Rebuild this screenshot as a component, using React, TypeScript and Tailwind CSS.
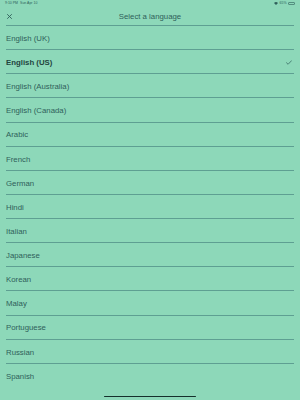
import React from "react";

const langs = [
  "English (UK)",
  "English (US)",
  "English (Australia)",
  "English (Canada)",
  "Arabic",
  "French",
  "German",
  "Hindi",
  "Italian",
  "Japanese",
  "Korean",
  "Malay",
  "Portuguese",
  "Russian",
  "Spanish",
];

export default function App() {
  return (
    <div
      className="relative w-[300px] h-[400px] overflow-hidden bg-[#8dd8b9] text-[#2f5f5a]"
      style={{ fontFamily: '"Liberation Sans", Arial, sans-serif' }}
    >
      {/* status bar */}
      <div className="h-[7px] flex items-center justify-between px-[5px] text-[3.5px] leading-none text-[#2f5f5a]">
        <div className="flex gap-[2px]">
          <span>9:10 PM</span>
          <span>Sun Apr 10</span>
        </div>
        <div className="flex items-center gap-[1.5px]">
          <svg width="4" height="3" viewBox="0 0 8 6">
            <path d="M4 6 L0 2 A6 6 0 0 1 8 2 Z" fill="#2f5f5a" />
          </svg>
          <span>65%</span>
          <div className="w-[7px] h-[3px] rounded-[1px] border-[0.5px] border-[#2f5f5a]/60 p-[0.5px]">
            <div className="h-full w-[65%] bg-[#3fbf5a]" />
          </div>
        </div>
      </div>
      {/* header */}
      <div className="mx-[6px] h-[19px] border-b border-[#5e9f92] relative flex items-center justify-center pt-[1px]">
        <svg
          className="absolute left-[0.5px] top-[6.5px]"
          width="5"
          height="5"
          viewBox="0 0 10 10"
        >
          <path d="M1 1 L9 9 M9 1 L1 9" stroke="#2f5f5a" strokeWidth="1.8" strokeLinecap="round" />
        </svg>
        <span className="text-[7.8px] leading-none">Select a language</span>
      </div>
      {/* list */}
      <div className="mx-[6px]">
        {langs.map((l, i) => (
          <div
            key={l}
            className={
              "h-[24.14px] flex items-center justify-between pt-[2.5px] " +
              (i < langs.length - 1 ? "border-b border-[#5e9f92]" : "")
            }
          >
            <span
              className={
                "text-[7.8px] leading-none " +
                (i === 1 ? "font-bold text-[#23453f]" : "")
              }
            >
              {l}
            </span>
            {i === 1 && (
              <svg width="6" height="5" viewBox="0 0 12 10" className="mr-[2px]">
                <path
                  d="M1 5.5 L4.2 8.5 L11 1.5"
                  fill="none"
                  stroke="#2f5f5a"
                  strokeWidth="1.4"
                  strokeLinecap="round"
                  strokeLinejoin="round"
                />
              </svg>
            )}
          </div>
        ))}
      </div>
      {/* home indicator */}
      <div className="absolute left-[104px] w-[92px] top-[395.5px] h-[1.5px] rounded-full bg-[#14302b]" />
    </div>
  );
}
